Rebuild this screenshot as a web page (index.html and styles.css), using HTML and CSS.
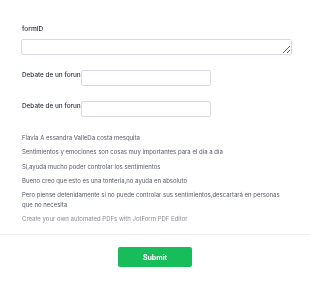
FILE: index.html
```html
<!DOCTYPE html>
<html lang="en">
<head>
    <meta charset="UTF-8">
    <meta name="viewport" content="width=device-width, initial-scale=1.0">
    <title>Form</title>
    <link rel="stylesheet" href="styles.css">
</head>
<body>
    <form class="form">
        <div class="form-body">
            <div class="field field-top">
                <label class="label">formID</label>
                <textarea class="textarea"></textarea>
            </div>
            <div class="field field-inline">
                <label class="label">Debate de un forun</label>
                <input class="input" type="text">
            </div>
            <div class="field field-inline">
                <label class="label">Debate de un forun</label>
                <input class="input" type="text">
            </div>
            <div class="text-block">
                <p>Flavia A essandra ValleDa costa mesquita</p>
                <p>Sentimientos y emociones son cosas muy importantes para el día a día</p>
                <p>Si,ayuda mucho poder controlar los sentimientos</p>
                <p>Bueno creo que esto es una tonteria,no ayuda en absoluto</p>
                <p>Pero piense detenidamente si no puede controlar sus sentimientos,descartará en personas que no necesita</p>
                <p class="muted">Create your own automated PDFs with JotForm PDF Editor</p>
            </div>
        </div>
        <div class="form-footer">
            <button class="submit" type="button">Submit</button>
        </div>
    </form>
</body>
</html>
```

FILE: styles.css
```css
* {
    margin: 0;
    padding: 0;
    box-sizing: border-box;
}

body {
    font-family: Inter, "Liberation Sans", sans-serif;
    background: #fff;
    color: #2c3345;
}

.form-body {
    padding: 25px 14px 0 22px;
}

.label {
    font-size: 6.6px;
    font-weight: 500;
    color: #2c3345;
}

.field-top .label {
    display: block;
    margin-bottom: 6px;
}

.textarea {
    display: block;
    width: 271px;
    height: 16px;
    margin-left: -1px;
    border: 1px solid #d8dae3;
    border-radius: 2px;
    background: #fff;
    resize: vertical;
}

.field-inline {
    display: flex;
    align-items: flex-start;
    margin-top: 15px;
}

.field-inline + .field-inline {
    margin-top: 15px;
}

.field-inline .label {
    font-size: 6.4px;
    white-space: nowrap;
    padding-top: 1px;
}

.input {
    width: 130px;
    height: 16px;
    border: 1px solid #d8dae3;
    border-radius: 2px;
    background: #fff;
}

.text-block {
    width: 268px;
    margin-top: 16px;
    font-size: 6px;
    color: #555a66;
}

.text-block p {
    line-height: 10px;
    margin-bottom: 4.3px;
}

.text-block .muted {
    color: #8a8d96;
}

.form-footer {
    margin-top: 10px;
    border-top: 1px solid #eceef3;
    padding-top: 12px;
    display: flex;
    justify-content: center;
}

.submit {
    width: 74px;
    height: 20px;
    border: none;
    border-radius: 2px;
    background: #18bd5b;
    color: #fff;
    font-family: inherit;
    font-size: 7px;
    font-weight: 700;
}
```
